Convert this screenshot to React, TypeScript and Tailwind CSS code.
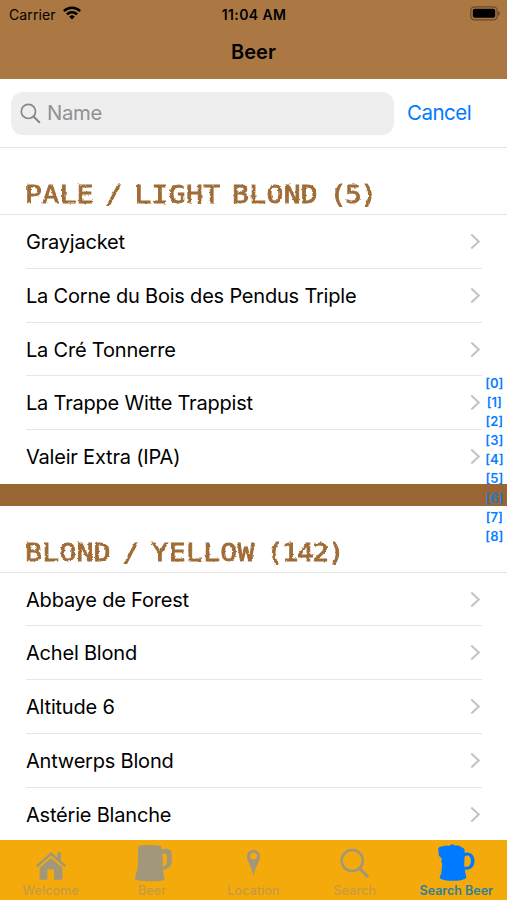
import { useState } from 'react';
import type { ReactNode } from 'react';
import clsx from 'clsx';

interface BeerSection {
  title: string;
  count: number;
  beers: string[];
}

const sections: BeerSection[] = [
  {
    title: 'PALE / LIGHT BLOND',
    count: 5,
    beers: [
      'Grayjacket',
      'La Corne du Bois des Pendus Triple',
      'La Cré Tonnerre',
      'La Trappe Witte Trappist',
      'Valeir Extra (IPA)'
    ]
  },
  {
    title: 'BLOND / YELLOW',
    count: 142,
    beers: ['Abbaye de Forest', 'Achel Blond', 'Altitude 6', 'Antwerps Blond', 'Astérie Blanche']
  }
];

const indexTitles = ['[0]', '[1]', '[2]', '[3]', '[4]', '[5]', '[6]', '[7]', '[8]'];

const HomeIcon = () => (
  <svg width="32" height="30" viewBox="0 0 32 30" fill="currentColor">
    <path d="M0.8 14.4 16 1l6.3 5.5V1.3h3.7v8.5l5.2 4.6-1.7 1.8L16 4.5 2.5 16.2z" />
    <path d="M4.6 16.8 16 7l11.4 9.8v12H19V18.6h-6.6v10.2H4.6z" />
  </svg>
);

const TankardIcon = () => (
  <svg width="38" height="38" viewBox="0 0 38 38" fill="currentColor">
    <path d="M4.2 2.4C5 .8 25.5.4 27.2 2.4l.5 3c4.5-1.7 10-.6 10 4v8.8c0 2.6-1.8 5-4.4 6.4-1.5.8-3 1.2-4.6 1.4l1.9 9.4C29 38 5 38 .8 35.2L3.6 24zm24.3 7.4.6 12.6c2.4-.4 3.8-2.6 3.8-4.8v-4.8c0-2.6-2.1-3.8-4.4-3z" fillRule="evenodd" />
  </svg>
);

const PinIcon = () => (
  <svg width="16" height="28" viewBox="0 0 16 28" fill="currentColor">
    <path fillRule="evenodd" d="M8.5.8a6.5 6.5 0 0 0-6.5 6.8C2 12.4 6.6 17.5 8.5 27.4 10.4 17.5 15 12.4 15 7.6A6.5 6.5 0 0 0 8.5.8zm0 2.9a3.4 3.4 0 1 1 0 6.8 3.4 3.4 0 0 1 0-6.8z" />
  </svg>
);

const SearchTabIcon = () => (
  <svg width="30" height="31" viewBox="0 0 30 31" fill="none" stroke="currentColor">
    <circle cx="12.2" cy="12.5" r="10.6" strokeWidth="2.5" />
    <path d="m19.6 20.4 8.4 8.6" strokeWidth="3.2" />
  </svg>
);

const FoamMugIcon = () => (
  <svg width="38" height="37" viewBox="0 0 38 37" fill="currentColor">
    <path d="M1.2 5.2C.8 3 3.8 2 6.4 2.2 8 1 10.5 1.6 12 1.9 14 0 17 .3 18.6 1.7c2.3-.5 4.6 0 5.7 1.5 2.8.4 4 2.6 3.2 4.5l.1 1.2c4.3-1.7 9.9 1 9.9 7.8 0 6.7-4.7 9.6-9.5 8.8l.1 2.8c.7 2.5 1.4 3.8 1 5.7C25 37.8 6.6 37.8 2.8 34c-.5-1.4 1.2-3.2 1.6-5.2l.7-9.2c-1.3-2-.6-3.8-.3-5.2-2.5-1.7-3.8-3.7-3-5.3zM27.6 12.4l-.4 10c4 1.6 6.7-1.2 6.7-5.7s-2.9-6.6-6.3-4.3z" fillRule="evenodd" />
  </svg>
);

const tabs: { id: string; label: string; icon: ReactNode; iconBox: string }[] = [
  { id: 'welcome', label: 'Welcome', icon: <HomeIcon />, iconBox: 'pt-[11px]' },
  { id: 'beer', label: 'Beer', icon: <TankardIcon />, iconBox: 'pt-1 pl-[1px]' },
  { id: 'location', label: 'Location', icon: <PinIcon />, iconBox: 'pt-[9px]' },
  { id: 'search', label: 'Search', icon: <SearchTabIcon />, iconBox: 'pt-2' },
  { id: 'search-beer', label: 'Search Beer', icon: <FoamMugIcon />, iconBox: 'pt-1' }
];

const StatusBar = () => (
  <div className="grid h-7 grid-cols-3 items-center pl-[9px] pr-[6px] text-[14px]">
    <div className="flex items-center gap-[7px]">
      <span className="tracking-[0.1px]">Carrier</span>
      <svg className="mb-[2px]" width="18" height="14" viewBox="0 0 18 14" fill="none" stroke="#000" strokeWidth="2.5">
        <path d="M.9 5.1a11.6 11.6 0 0 1 16.2 0" />
        <path d="M3.9 8.3a7.3 7.3 0 0 1 10.2 0" />
        <path d="M9 13.6 6.2 10.7a4 4 0 0 1 5.6 0z" fill="#000" stroke="none" />
      </svg>
    </div>
    <span className="pr-[2px] text-center text-[14px] font-semibold tracking-[0.4px]">11:04 AM</span>
    <svg className="mb-[2px] justify-self-end" width="31" height="15" viewBox="0 0 31 15">
      <rect x=".8" y=".8" width="26.4" height="13" rx="3.7" fill="none" stroke="#000" strokeOpacity=".4" strokeWidth="1.2" />
      <rect x="2.8" y="2.8" width="22.4" height="9" rx="2" />
      <path d="M28.4 5a2.8 2.8 0 0 1 0 4.8z" opacity=".45" />
    </svg>
  </div>
);

const SearchBar = () => (
  <div className="flex h-[69px] shrink-0 items-center border-b border-[#e4e4e4] pl-[11px]">
    <div className="flex h-[43px] w-[383px] items-center gap-[6px] rounded-[12px] bg-[#eeeeee] pl-[9px] text-[20.3px] tracking-[-0.3px] text-[#919195]">
      <svg width="21" height="21" viewBox="0 0 21 21" fill="none" stroke="#88888c" strokeWidth="1.7">
        <circle cx="8.4" cy="8.4" r="7.1" />
        <path d="m13.5 13.6 5.8 5.6" strokeWidth="2.1" strokeLinecap="round" />
      </svg>
      <span>Name</span>
    </div>
    <button className="ml-[13px] text-[20.5px] tracking-[-0.5px] text-[#007aff]">Cancel</button>
  </div>
);

const Section = ({ title, count, beers }: BeerSection) => (
  <section>
    <div className="flex h-[67px] items-end border-b border-[#e4e4e6] pl-[25px]">
      <h2 className="origin-left scale-x-[1.12] whitespace-pre font-['DejaVu_Sans_Mono',monospace] text-[25px] leading-[39px] tracking-[0.3px] text-[#a06c36] [-webkit-text-stroke:0.8px_#a06c36] [filter:url(#chalk)] [word-spacing:-4.9px]">
        {title} <span className="tracking-[-1.4px]">({count})</span>
      </h2>
    </div>
    <ul className="pl-[26px] pr-[25px]">
      {beers.map((beer) => (
        <li
          key={beer}
          className="flex h-[53.75px] items-center justify-between border-b border-[#e6e6e8] pt-[1.5px] text-[20px] tracking-[-0.2px] last:border-transparent"
        >
          <span>{beer}</span>
          <svg className="mr-[1px] mb-[1px]" width="11" height="17" viewBox="0 0 11 17" fill="none" stroke="#c4c4c7" strokeWidth="2.1">
            <path d="m1.3 1.6 7.4 6.9-7.4 6.9" />
          </svg>
        </li>
      ))}
    </ul>
  </section>
);

const App = () => {
  const [activeTab, setActiveTab] = useState('search-beer');

  return (
    <div className="relative flex h-[900px] w-[507px] flex-col overflow-hidden bg-white font-['Inter',sans-serif] text-black">
      {/* roughens the section titles */}
      <svg className="absolute h-0 w-0">
        <filter id="chalk">
          <feTurbulence type="fractalNoise" baseFrequency="0.3" numOctaves="2" result="noise" />
          <feDisplacementMap in="SourceGraphic" in2="noise" scale="2.5" xChannelSelector="R" yChannelSelector="G" />
        </filter>
      </svg>

      <header className="h-[79px] shrink-0 bg-[#ab7843]">
        <StatusBar />
        <h1 className="pt-[9px] text-center text-[20px] leading-[30px] font-semibold">Beer</h1>
      </header>

      <SearchBar />

      <main className="min-h-0 flex-1 overflow-hidden">
        <Section {...sections[0]} />
        <div className="h-[21.75px] bg-[#996633]" />
        <Section {...sections[1]} />
      </main>

      <nav className="grid h-[60px] shrink-0 grid-cols-5 bg-[#f5aa0c]">
        {tabs.map((tab) => (
          <button
            key={tab.id}
            onClick={() => setActiveTab(tab.id)}
            className={clsx(
              'flex flex-col items-center',
              activeTab === tab.id ? 'text-[#007aff]' : 'text-[#a3977a]'
            )}
          >
            <span className={clsx('flex h-[43px] items-start', tab.iconBox)}>{tab.icon}</span>
            <span
              className={clsx(
                'text-[12.5px] leading-4 whitespace-nowrap',
                activeTab === tab.id
                  ? 'font-semibold text-[#2f7f9c]'
                  : 'font-medium tracking-[0.1px] text-[#c69a42]'
              )}
            >
              {tab.label}
            </span>
          </button>
        ))}
      </nav>

      <div className="absolute top-[374px] right-[3.5px] flex flex-col items-center text-[13px] leading-[19.1px] font-semibold text-[#087eff]">
        {indexTitles.map((title) => (
          <span key={title} className={clsx(title === '[6]' && 'text-[#1e78cf]')}>
            {title}
          </span>
        ))}
      </div>
    </div>
  );
};

export default App;
